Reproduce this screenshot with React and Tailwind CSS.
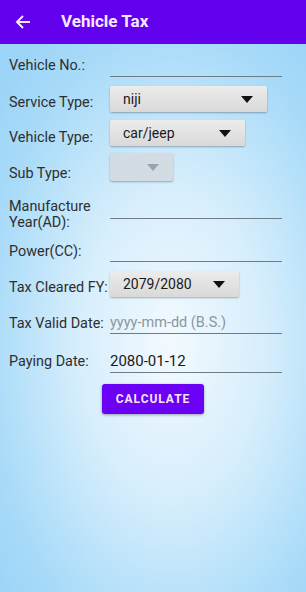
import React from 'react';

const Caret = ({ muted = false }) => (
  <svg width="12" height="7" viewBox="0 0 12 7" className="shrink-0">
    <path d="M0 0 L12 0 L6 7 Z" fill={muted ? '#9aa3aa' : '#111'} />
  </svg>
);

const Dropdown = ({ value, width, muted = false, height = 'h-[26px]' }) => (
  <div
    className={`${height} ${width} flex items-center justify-between pl-[13px] pr-[14px] rounded-[2px] shadow-[0_1px_2px_rgba(0,0,0,0.3)] ${
      muted ? 'bg-[#d3dce2]' : 'bg-gradient-to-b from-[#ececec] to-[#d9d9d9]'
    }`}
  >
    <span className="text-[14px] text-[#1a1a1a]">{value}</span>
    <Caret muted={muted} />
  </div>
);

const Underline = ({ children, height = 'h-[23px]' }) => (
  <div className={`${height} w-[172px] border-b border-[#6f7c86] flex items-end pb-[2px]`}>
    {children}
  </div>
);

// label keeps the row height of its field; text is nudged down with padding
const Label = ({ children, className = '' }) => (
  <div className={`w-[101px] shrink-0 text-[14.4px] leading-[16px] text-[#2f2f2f] overflow-visible ${className}`}>
    {children}
  </div>
);

export default function App() {
  return (
    <div
      className="w-[306px] h-[592px] overflow-hidden bg-[radial-gradient(ellipse_75%_65%_at_56%_58%,#f3faff_0%,#d7eefc_40%,#a9dbf9_80%,#9cd4f7_100%)]"
      style={{ fontFamily: 'Roboto, "Noto Sans", sans-serif' }}
    >
      <div className="h-[44px] bg-[#6200ee] flex items-center">
        <svg width="16" height="16" viewBox="0 0 16 16" className="ml-[15px]">
          <path d="M15 8 H2 M8 2 L2 8 L8 14" stroke="#f6e9ff" strokeWidth="2" fill="none" />
        </svg>
        <span className="ml-[30px] text-[17px] font-bold text-[#f6e9ff]">Vehicle Tax</span>
      </div>

      <div className="pl-[9px] flex flex-col">
        {/* Vehicle No */}
        <div className="mt-[9px] flex items-start">
          <Label className="h-[24px] pt-[5px]">Vehicle No.:</Label>
          <Underline height="h-[24px]" />
        </div>

        {/* Service Type */}
        <div className="mt-[9px] flex items-start">
          <Label className="h-[26px] pt-[9px]">Service Type:</Label>
          <Dropdown value="niji" width="w-[157px]" />
        </div>

        {/* Vehicle Type */}
        <div className="mt-[8px] flex items-start">
          <Label className="h-[26px] pt-[10px]">Vehicle Type:</Label>
          <Dropdown value="car/jeep" width="w-[135px]" />
        </div>

        {/* Sub Type */}
        <div className="mt-[7px] flex items-start">
          <Label className="h-[28px] pt-[13px]">Sub Type:</Label>
          <Dropdown value="" width="w-[63px]" muted height="h-[28px]" />
        </div>

        {/* Manufacture Year */}
        <div className="mt-[16px] flex items-start">
          <Label className="h-[22px] pt-[2px]">
            Manufacture
            <br />
            Year(AD):
          </Label>
          <Underline height="h-[22px]" />
        </div>

        {/* Power */}
        <div className="mt-[15px] flex items-start">
          <Label className="h-[28px] pt-[10px]">Power(CC):</Label>
          <Underline height="h-[28px]" />
        </div>

        {/* Tax Cleared FY */}
        <div className="mt-[9px] flex items-start">
          <Label className="h-[26px] pt-[9px]">Tax Cleared FY:</Label>
          <Dropdown value="2079/2080" width="w-[129px]" />
        </div>

        {/* Tax Valid Date */}
        <div className="mt-[13px] flex items-start">
          <Label className="h-[24px] pt-[6px]">Tax Valid Date:</Label>
          <Underline height="h-[24px]">
            <span className="text-[14.5px] leading-[17px] text-[#8c969e]">yyyy-mm-dd (B.S.)</span>
          </Underline>
        </div>

        {/* Paying Date */}
        <div className="mt-[15px] flex items-start">
          <Label className="h-[24px] pt-[5px]">Paying Date:</Label>
          <Underline height="h-[24px]">
            <span className="text-[15px] leading-[18px] text-[#1a1a1a]">2080-01-12</span>
          </Underline>
        </div>

        <div className="mt-[11px] pl-[93px]">
          <button className="w-[102px] h-[30px] rounded-[3px] bg-[#6a00f4] shadow-[0_1px_3px_rgba(0,0,0,0.35)] text-[12px] font-bold tracking-[0.08em] text-[#f6e4ff]">
            CALCULATE
          </button>
        </div>
      </div>
    </div>
  );
}
